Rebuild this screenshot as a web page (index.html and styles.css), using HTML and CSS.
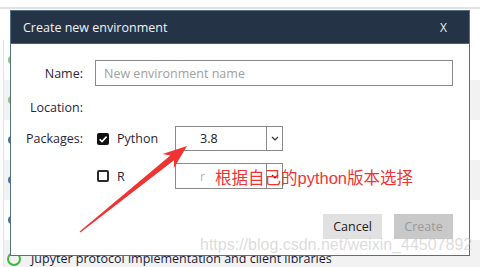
FILE: index.html
```html
<!DOCTYPE html>
<html>
<head>
<meta charset="utf-8">
<link rel="stylesheet" href="styles.css">
</head>
<body>
<div class="page">
  <div class="topbar"></div>
  <div class="list">
    <div class="row"><span class="ring"></span></div>
    <div class="row"><span class="ring"></span></div>
    <div class="row"><span class="dot"></span></div>
    <div class="row"><span class="dot"></span></div>
    <div class="row"><span class="dot"></span></div>
    <div class="row last"><span class="ring big"></span><span class="rowtext">Jupyter protocol implementation and client libraries</span></div>
  </div>

  <div class="dialog">
    <div class="dhead">
      <span class="dtitle">Create new environment</span>
      <span class="dclose">X</span>
    </div>
    <div class="dbody">
      <div class="frow name">
        <label class="lbl">Name:</label>
        <div class="input">New environment name</div>
      </div>
      <div class="frow location">
        <label class="lbl">Location:</label>
      </div>
      <div class="frow python">
        <label class="lbl">Packages:</label>
        <div class="pkg">
          <span class="cb checked"><svg width="12" height="12" viewBox="0 0 12 12"><path d="M2.6 6.2 L5 8.6 L9.6 3.6" fill="none" stroke="#fff" stroke-width="1.6"/></svg></span>
          <span class="pname">Python</span>
          <div class="select"><span class="sval">3.8</span><span class="sarrow"><svg width="8" height="5" viewBox="0 0 8 5"><path d="M1 1 L4 4 L7 1" fill="none" stroke="#333" stroke-width="1.2"/></svg></span></div>
        </div>
      </div>
      <div class="frow rlang">
        <span class="lbl"></span>
        <div class="pkg">
          <span class="cb"></span>
          <span class="pname">R</span>
          <div class="select"><span class="sval dim">r</span><span class="sarrow"><svg width="8" height="5" viewBox="0 0 8 5"><path d="M1 1 L4 4 L7 1" fill="none" stroke="#333" stroke-width="1.2"/></svg></span></div>
        </div>
      </div>
      <div class="actions">
        <button class="btn cancel">Cancel</button>
        <button class="btn create">Create</button>
      </div>
    </div>
  </div>

  <svg class="arrow" width="480" height="267" viewBox="0 0 480 267">
    <polygon points="79.6,231.5 170.3,155.6 162.6,154.0 187,146 173.9,168.1 174.0,160.3 80.4,232.5" fill="#f03434"/>
  </svg>
  <div class="note">根据自己的python版本选择</div>
  <div class="watermark">https://blog.csdn.net/weixin_44507892</div>
</div>
</body>
</html>
```
FILE: styles.css
```css
html, body {
  margin: 0;
  padding: 0;
}
body {
  width: 480px;
  height: 267px;
  overflow: hidden;
  background: #fff;
  font-family: "Open Sans", "Noto Sans", sans-serif;
}
.page {
  position: relative;
  width: 480px;
  height: 267px;
  overflow: hidden;
}
.topbar {
  height: 7px;
  border-bottom: 2px solid #e2e2e2;
}
.list {
  margin-top: 31px;
  border-left: 1px solid #e6e6e6;
  margin-left: 3px;
}
.row {
  height: 40px;
  display: flex;
  align-items: center;
  padding-left: 3px;
  background: #fff;
}
.row:nth-child(even) {
  background: #f2f2f2;
}
.row.last {
  align-items: flex-start;
  padding-top: 12px;
  box-sizing: border-box;
}
.ring {
  width: 8px;
  height: 8px;
  border: 2px solid #7ccf6c;
  border-radius: 50%;
  box-sizing: border-box;
  margin-left: 1px;
}
.ring.big {
  width: 14px;
  height: 14px;
  border: 2.5px solid #3dba3d;
  margin-left: 0;
}
.dot {
  width: 8px;
  height: 8px;
  border-radius: 50%;
  background: #3a78b0;
  margin-left: 1px;
}
.rowtext {
  margin-left: 10px;
  font-size: 12.5px;
  line-height: 14px;
  color: #1a1a3a;
}

.dialog {
  position: absolute;
  left: 10px;
  top: 10px;
  width: 460px;
  height: 246px;
  box-sizing: border-box;
  border: 1px solid #557088;
  background: #fff;
  display: flex;
  flex-direction: column;
}
.dhead {
  height: 33px;
  box-sizing: border-box;
  background: #243446;
  border-bottom: 1px solid #4a6078;
  display: flex;
  align-items: center;
  justify-content: space-between;
  padding: 0 22px 0 12px;
  color: #f2f2f2;
  font-size: 12.5px;
}
.dclose {
  font-size: 12px;
  color: #e8eef4;
}
.dbody {
  flex: 1;
  display: flex;
  flex-direction: column;
  padding: 16px 16px 16px 0;
  font-size: 12.5px;
  color: #2b2538;
}
.frow {
  display: flex;
  gap: 12px;
}
.lbl {
  width: 72px;
  flex: none;
  display: flex;
  align-items: center;
  justify-content: flex-end;
}
.frow.name {
  height: 26px;
}
.frow.location {
  height: 18px;
  margin-top: 12px;
}
.frow.python {
  height: 25px;
  margin-top: 10px;
}
.frow.rlang {
  height: 26px;
  margin-top: 12px;
}
.input {
  flex: 1;
  box-sizing: border-box;
  border: 1px solid #8a8a8a;
  display: flex;
  align-items: center;
  padding-left: 8px;
  color: #a0a0a0;
}
.pkg {
  display: flex;
  align-items: center;
  padding-left: 2px;
}
.cb {
  width: 12px;
  height: 12px;
  box-sizing: border-box;
  border: 2px solid #2a2a2a;
  border-radius: 2px;
  display: flex;
  align-items: center;
  justify-content: center;
}
.cb.checked {
  background: #111;
  border: none;
}
.pname {
  margin-left: 8px;
  width: 58px;
  color: #2b2538;
}
.select {
  width: 108px;
  height: 100%;
  box-sizing: border-box;
  border: 1px solid #8a8a8a;
  display: flex;
}
.sval {
  flex: 1;
  padding-left: 24px;
  display: flex;
  align-items: center;
  color: #222;
}
.sval.dim {
  color: #b8b8b8;
}
.sarrow {
  width: 15px;
  border-left: 1px solid #8a8a8a;
  display: flex;
  align-items: center;
  justify-content: center;
}
.actions {
  margin-top: auto;
  display: flex;
  justify-content: flex-end;
  gap: 12px;
}
.btn {
  width: 59px;
  height: 25px;
  border: none;
  padding: 0;
  font-family: "Open Sans", "Noto Sans", sans-serif;
  font-size: 12.5px;
}
.cancel {
  background: #e1e1e1;
  color: #222;
}
.create {
  background: #c9c9c9;
  color: #9a9a9a;
}

.arrow {
  position: absolute;
  left: 0;
  top: 0;
}
.note {
  position: absolute;
  left: 215px;
  top: 167px;
  font-family: "Liberation Sans", "Noto Sans CJK SC", sans-serif;
  font-size: 16.5px;
  line-height: 22px;
  color: #f03434;
  white-space: nowrap;
}
.watermark {
  position: absolute;
  left: 200px;
  top: 235px;
  font-family: "Liberation Sans", sans-serif;
  font-size: 16px;
  line-height: 20px;
  color: rgba(190, 190, 190, 0.55);
  white-space: nowrap;
}
```
